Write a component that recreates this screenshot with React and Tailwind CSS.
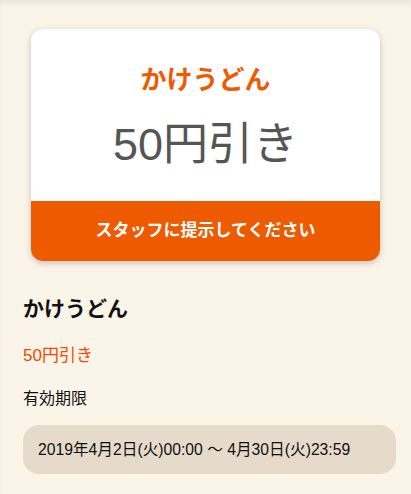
export default function App() {
  const font = { fontFamily: '"Liberation Sans", "Noto Sans CJK JP", sans-serif' };
  return (
    <div className="w-[411px] h-[494px] bg-[#fbf5e9] shadow-[inset_0_6px_6px_-3px_rgba(0,0,0,0.08)] overflow-hidden" style={font}>
      <div className="pt-[29px] px-[31px]">
        <div className="bg-white rounded-[12px] overflow-hidden shadow-[0_2px_6px_rgba(0,0,0,0.22)] h-[232px] flex flex-col">
          <div className="flex-1 flex flex-col items-center">
            <div className="mt-[33px] text-[26px] leading-[36px] font-bold text-[#ee5a00]">かけうどん</div>
            <div className="mt-[17px] text-[45px] leading-[60px] text-[#555555]">50円引き</div>
          </div>
          <div className="h-[60px] bg-[#ee5a00] flex items-center justify-center text-white font-bold text-[17px]">
            スタッフに提示してください
          </div>
        </div>
      </div>
      <div className="pl-[23px] pr-[15px]">
        <div className="mt-[33px] text-[21px] leading-[30px] font-bold text-[#111]">かけうどん</div>
        <div className="mt-[20px] text-[17px] leading-[24px] text-[#f04a00]">50円引き</div>
        <div className="mt-[20px] text-[16px] leading-[22px] text-[#111]">有効期限</div>
        <div className="mt-[15px] h-[49px] bg-[#e6dbca] rounded-[16px] flex items-center px-[15px] text-[15.7px] text-[#111]">
          2019年4月2日(火)00:00 〜 4月30日(火)23:59
        </div>
      </div>
    </div>
  );
}
